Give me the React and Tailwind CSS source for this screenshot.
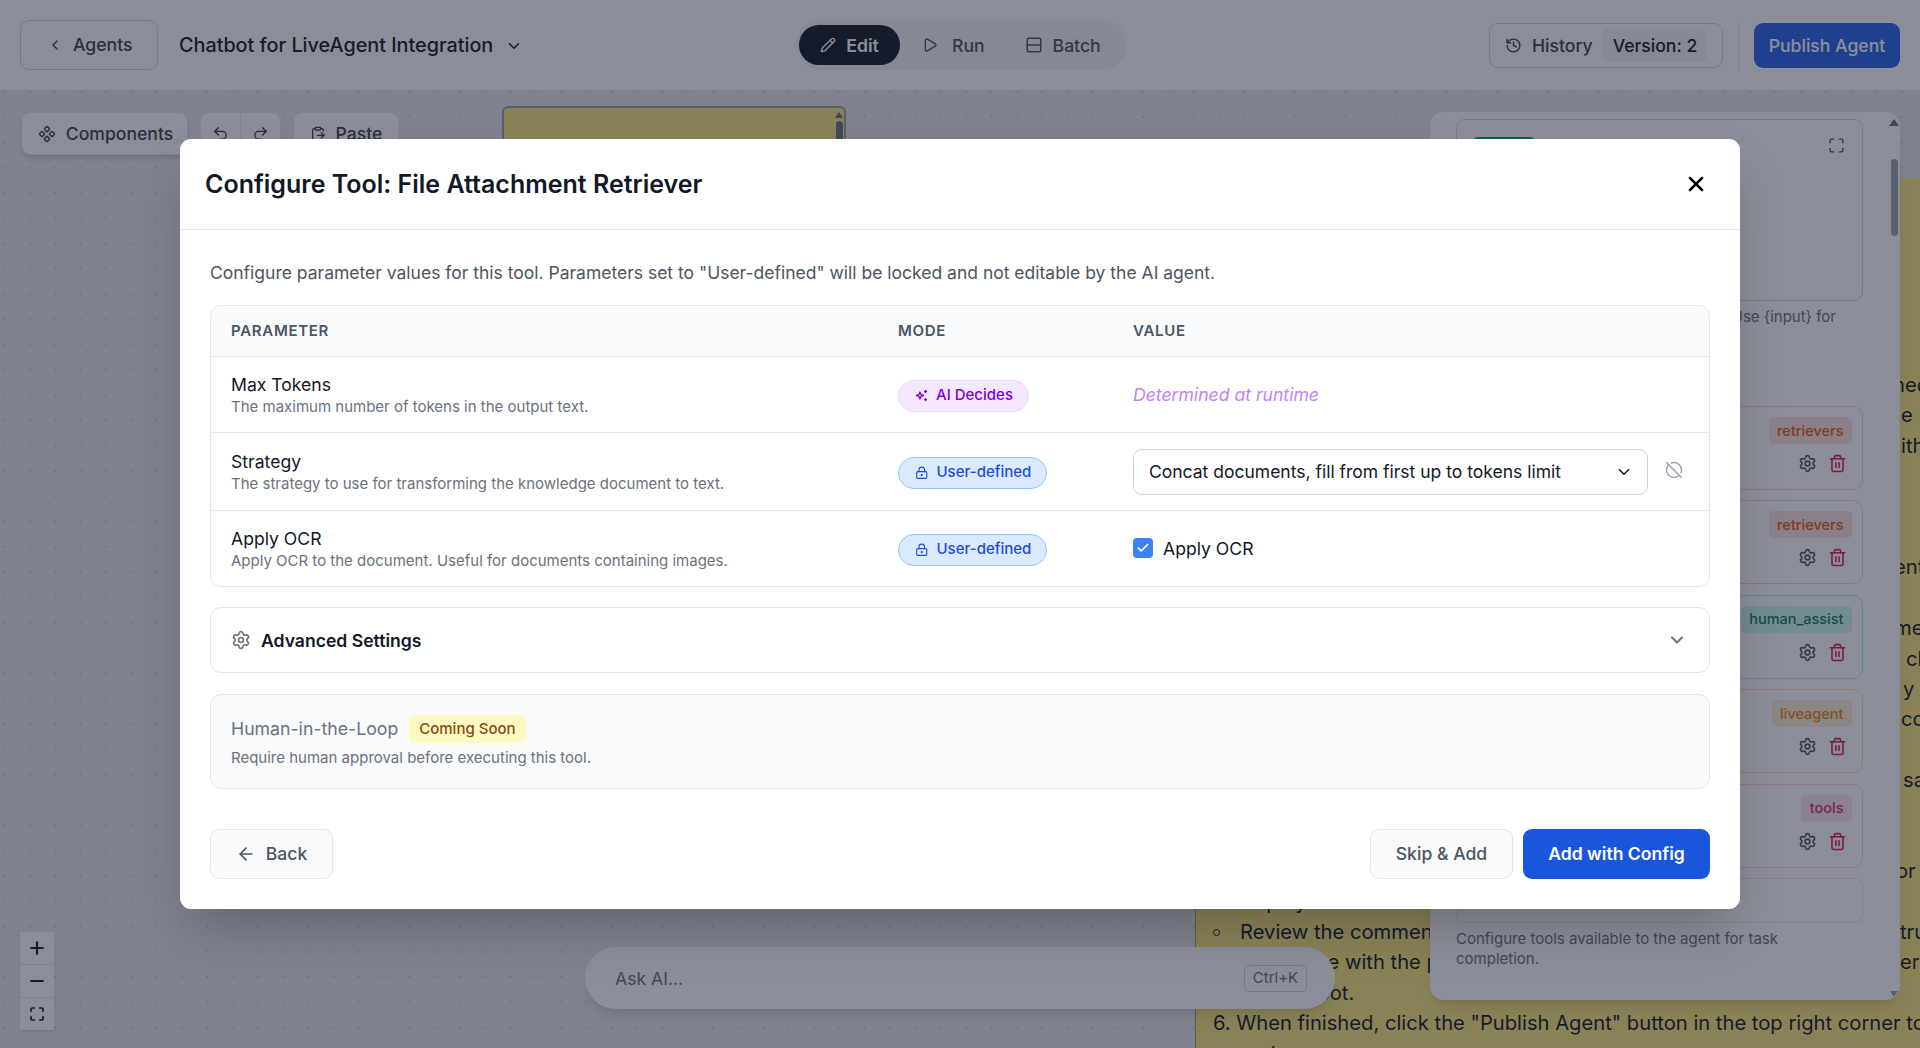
import React from "react";
import {
  ArrowLeft,
  ChevronDown,
  ChevronLeft,
  CircleOff,
  Check,
  ClipboardPaste,
  Component,
  History,
  LockKeyhole,
  Maximize,
  Minus,
  Pencil,
  Play,
  Plus,
  Redo2,
  Rows2,
  Settings,
  Trash2,
  Undo2,
  X,
} from "lucide-react";

// lines of the note that stick out from behind the panels
const noteRows = [
  { pad: "pl-[697px]", text: "ned" },
  { pad: "pl-[705px]", text: "e \"Add" },
  { pad: "pl-[705px]", text: "ith" },
  { pad: "pl-[705px]", text: "" },
  { pad: "pl-[705px]", text: "" },
  { pad: "pl-[705px]", text: "" },
  { pad: "pl-[698px]", text: "ent" },
  { pad: "pl-[705px]", text: "" },
  { pad: "pl-[698px]", text: "me" },
  { pad: "pl-[710px]", text: "ch" },
  { pad: "pl-[707px]", text: "y" },
  { pad: "pl-[705px]", text: "cc" },
  { pad: "pl-[705px]", text: "" },
  { pad: "pl-[707px]", text: "sa" },
  { pad: "pl-[705px]", text: "" },
  { pad: "pl-[705px]", text: "" },
  { pad: "pl-[700px]", text: "or y" },
  { pad: "pl-[44px]", text: "Deploy" },
];

const tools = [
  { label: "retrievers", tag: "bg-[#fee2e2] text-[#ea580c]", border: "border-[#fecaca]" },
  { label: "retrievers", tag: "bg-[#fee2e2] text-[#ea580c]", border: "border-[#fecaca]" },
  { label: "human_assist", tag: "bg-[#ccfbf1] text-[#0f766e]", border: "border-[#99f6e4]" },
  { label: "liveagent", tag: "bg-[#ffedd5] text-[#ea8a0c]", border: "border-[#fed7aa]" },
  { label: "tools", tag: "bg-[#fce7f3] text-[#db2777]", border: "border-[#fbcfe8]" },
];

function AiIcon() {
  return (
    <svg width="15" height="15" viewBox="0 0 24 24" fill="none" stroke="currentColor" strokeWidth="2.2" strokeLinejoin="round" strokeLinecap="round">
      <path d="M9.5 6.5l1.5 4 4 1.5-4 1.5-1.5 4-1.5-4-4-1.5 4-1.5z" />
      <path d="M18.5 4v3M17 5.5h3M18.5 17v3M17 18.5h3" />
    </svg>
  );
}

function ModeBadge({ ai }) {
  if (ai) {
    return (
      <span className="inline-flex items-center gap-[7px] h-[32px] w-[131px] pl-[15px] rounded-full border border-[#e9d5ff] bg-[#f3e8ff] text-[#8200db] text-[15px] font-medium">
        <AiIcon />
        AI Decides
      </span>
    );
  }
  return (
    <span className="inline-flex items-center gap-[8px] h-[32px] w-[149px] pl-[16px] rounded-full border border-[#93c5fd] bg-[#dbeafe] text-[#1d4ed8] text-[15px] font-medium">
      <LockKeyhole size={13.5} />
      User-defined
    </span>
  );
}

function ParamRow({ name, desc, height, border, children }) {
  return (
    <div className={`grid grid-cols-[667px_235px_1fr] items-center ${height} ${border ? "border-t border-[#e5e7eb]" : ""}`}>
      <div className="pl-[20px]">
        <div className="text-[17.6px] leading-[22px] text-[#111827]">{name}</div>
        <div className="mt-[2px] text-[15px] leading-[17px] text-[#6b7280]">{desc}</div>
      </div>
      <div className="pl-[20px] pt-[2px] flex items-center">{children[0]}</div>
      <div className="pl-[20px] flex items-center">{children[1]}</div>
    </div>
  );
}

function Modal() {
  return (
    <div className="w-[1560px] h-[770px] bg-white rounded-[11px] shadow-2xl flex flex-col">
      <div className="h-[91px] shrink-0 flex items-center justify-between pl-[25px] pr-[32px] border-b border-[#e5e7eb]">
        <h2 className="pt-[2px] text-[25px] font-semibold text-[#111827]">Configure Tool: File Attachment Retriever</h2>
        <X size={24} strokeWidth={2.5} className="text-black" />
      </div>

      <div className="flex-1 px-[30px] flex flex-col">
        <p className="mt-[29px] h-[27px] leading-[27px] text-[17.5px] text-[#4b5563]">
          Configure parameter values for this tool. Parameters set to "User-defined" will be locked and not editable by the AI agent.
        </p>

        <div className="mt-[19px] border border-[#e5e7eb] rounded-[11px] overflow-hidden">
          <div className="grid grid-cols-[667px_235px_1fr] items-center h-[51px] bg-[#f9fafb] border-b border-[#e5e7eb] text-[15px] font-semibold tracking-[0.7px] text-[#4b5563]">
            <div className="pl-[20px]">PARAMETER</div>
            <div className="pl-[20px]">MODE</div>
            <div className="pl-[20px]">VALUE</div>
          </div>
          <ParamRow name="Max Tokens" desc="The maximum number of tokens in the output text." height="h-[75px]">
            <ModeBadge ai />
            <span className="pt-[2px] italic text-[17.6px] text-[#c084fc]">Determined at runtime</span>
          </ParamRow>
          <ParamRow name="Strategy" desc="The strategy to use for transforming the knowledge document to text." height="h-[78px]" border>
            <ModeBadge />
            <div className="flex items-center gap-[17px]">
              <div className="w-[515px] h-[46px] flex items-center justify-between pl-[15px] pr-[14px] border border-[#d1d5db] rounded-[9px] text-[17.5px] text-[#111827]">
                <span className="pt-[1px]">Concat documents, fill from first up to tokens limit</span>
                <ChevronDown size={18} />
              </div>
              <CircleOff size={18} className="-mt-[3px] text-[#9ca3af]" />
            </div>
          </ParamRow>
          <ParamRow name="Apply OCR" desc="Apply OCR to the document. Useful for documents containing images." height="h-[76px]" border>
            <ModeBadge />
            <div className="flex items-center gap-[10px] text-[17.6px] text-[#111827]">
              <span className="w-[20px] h-[20px] rounded-[4px] bg-[#3b82f6] flex items-center justify-center">
                <Check size={14} strokeWidth={3} className="text-white" />
              </span>
              <span className="pt-[1px]">Apply OCR</span>
            </div>
          </ParamRow>
        </div>

        <div className="mt-[20px] h-[66px] shrink-0 border border-[#e5e7eb] rounded-[11px] flex items-center justify-between pl-[20px] pr-[22px]">
          <div className="flex items-center gap-[10px] text-[17.6px] font-semibold text-[#111827]">
            <Settings size={20} className="text-[#6b7280]" />
            <span className="pt-[2px]">Advanced Settings</span>
          </div>
          <ChevronDown size={20} strokeWidth={2.5} className="text-[#6b7280]" />
        </div>

        <div className="mt-[21px] h-[95px] shrink-0 border border-[#e5e7eb] bg-[#f9fafb] rounded-[11px] pl-[20px] pt-[20px]">
          <div className="flex items-center gap-[11px] h-[28px]">
            <span className="text-[17.7px] text-[#6b7280]">Human-in-the-Loop</span>
            <span className="h-[28px] px-[10px] flex items-center rounded-[6px] bg-[#fef9c3] text-[#854d0e] text-[15px] font-medium">Coming Soon</span>
          </div>
          <div className="mt-[6px] text-[15px] leading-[17px] text-[#6b7280]">Require human approval before executing this tool.</div>
        </div>

        <div className="mt-[40px] flex justify-between">
          <button className="w-[123px] h-[50px] flex items-center justify-center gap-[10px] border border-[#e5e7eb] bg-[#f9fafb] rounded-[9px] text-[17.6px] font-medium text-[#4b5563]">
            <ArrowLeft size={20} />
            Back
          </button>
          <div className="flex gap-[10px]">
            <button className="w-[143px] h-[50px] border border-[#e5e7eb] bg-[#f9fafb] rounded-[9px] text-[17.6px] font-medium text-[#4b5563]">Skip &amp; Add</button>
            <button className="w-[187px] h-[50px] bg-[#1a56db] rounded-[9px] text-[17.6px] font-semibold text-white">Add with Config</button>
          </div>
        </div>
      </div>
    </div>
  );
}

function TopBar() {
  return (
    <header className="relative h-[91px] shrink-0 bg-white border-b border-[#e5e7eb] flex items-center pt-[1px] pl-[20px] pr-[20px]">
      <button className="-mt-[2px] w-[138px] h-[50px] flex items-center pl-[26px] gap-[10px] border border-[#d1d5db] rounded-[9px] text-[17.6px] font-medium text-[#374151]">
        <ChevronLeft size={16} />
        <span className="pt-[2px]">Agents</span>
      </button>
      <div className="ml-[21px] flex items-center gap-[12px] text-[19.8px] font-medium text-[#111827]">
        Chatbot for LiveAgent Integration
        <ChevronDown size={18} />
      </div>
      <div className="absolute left-[796px] top-[20px] w-[331px] h-[50px] rounded-full bg-[#f3f4f6] flex items-center pl-[3px] text-[17.6px] font-medium text-[#4b5563]">
        <span className="w-[101px] h-[40px] rounded-full bg-[#111827] text-white font-semibold flex items-center justify-center gap-[10px]">
          <Pencil size={16} />
          <span className="pt-[2px]">Edit</span>
        </span>
        <span className="ml-[22px] flex items-center gap-[14px]">
          <Play size={16} />
          <span className="pt-[2px]">Run</span>
        </span>
        <span className="ml-[40px] flex items-center gap-[10px]">
          <Rows2 size={18} />
          <span className="pt-[2px]">Batch</span>
        </span>
      </div>
      <div className="ml-auto flex items-center">
        <div className="w-[234px] h-[45px] flex items-center pl-[15px] gap-[10px] border border-[#d1d5db] rounded-[9px] text-[17.6px] font-medium text-[#374151]">
          <History size={17} />
          <span className="pt-[1px]">History</span>
          <span className="h-[33px] px-[10px] pt-[1px] flex items-center rounded-[5px] bg-[#f3f4f6] text-[#111827]">Version: 2</span>
        </div>
        <div className="mx-[15px] w-px h-[50px] bg-[#e5e7eb]" />
        <button className="w-[146px] h-[45px] pt-[1px] rounded-[9px] bg-[#2563eb] text-white text-[17.6px] font-medium">Publish Agent</button>
      </div>
    </header>
  );
}

function SidePanel() {
  return (
    <div className="absolute left-[1430px] top-[21px] w-[470px] h-[888px] bg-white rounded-[14px] shadow-lg pl-[26px] pt-[7px] flex flex-col">
      <div className="relative h-[182px] shrink-0 w-[407px] border border-[#d1d5db] rounded-[9px]">
        <div className="absolute left-[16px] top-[17px] w-[62px] h-[24px] rounded-[5px] bg-[#0e9f6e]" />
        <Maximize size={17} className="absolute right-[17px] top-[17px] text-[#4b5563]" />
      </div>
      <div className="mt-[5px] h-[20px] w-[407px] text-right pr-[27px] text-[15px] text-[#6b7280]">Use {"{input}"} for</div>
      <div className="mt-[80px] flex flex-col gap-[10.4px]">
        {tools.map((tool, i) => (
          <div key={i} className={`w-[407px] h-[84px] border ${tool.border} rounded-[10px] flex flex-col items-end pr-[10px] pt-[10px]`}>
            <span className={`px-[8.5px] h-[27px] flex items-center rounded-[5px] text-[14.5px] font-medium ${tool.tag}`}>{tool.label}</span>
            <div className="mt-[10px] flex items-center gap-[11px] pr-[5px]">
              <Settings size={19} className="text-[#4b5563]" />
              <Trash2 size={19} className="text-[#e11d48]" />
            </div>
          </div>
        ))}
      </div>
      <div className="mt-[10.4px] w-[407px] h-[45px] shrink-0 border border-[#e5e7eb] rounded-[9px]" />
      <p className="mt-[6px] w-[340px] text-[15px] leading-[20px] text-[#6b7280]">Configure tools available to the agent for task completion.</p>
      {/* scroll bar */}
      <div className="absolute right-[1px] top-[7px] w-0 h-0 border-l-[5px] border-r-[5px] border-b-[7px] border-l-transparent border-r-transparent border-b-[#6b7280]" />
      <div className="absolute right-[2px] top-[47px] w-[7px] h-[77px] rounded-full bg-[#9ca3af]" />
      <div className="absolute right-[2px] bottom-[3px] w-0 h-0 border-l-[4px] border-r-[4px] border-t-[6px] border-l-transparent border-r-transparent border-t-[#9ca3af]" />
    </div>
  );
}

function Canvas() {
  return (
    <div className="relative flex-1 bg-[#e7e8ec] bg-[radial-gradient(#c4ccd8_1px,transparent_1px)] bg-[length:25.3px_25.3px] bg-[position:-8px_-12px] overflow-hidden">
      {/* sticky note behind the panel */}
      <div className="absolute left-[1195px] top-[87px] w-[740px] h-[900px] bg-[#fde67c] border-l border-[#a89f4f] text-[20.2px] text-[#111827]">
        <div className="h-[192px]" />
        {noteRows.map((row, i) => (
          <div key={i} className={`h-[30.4px] leading-[30.4px] whitespace-nowrap ${row.pad}`}>{row.text}</div>
        ))}
        <div className="h-[30.4px] leading-[30.4px] whitespace-nowrap pl-[17px] flex items-center">
          <span className="w-[7px] h-[7px] mr-[20px] rounded-full border border-[#111827]" />
          <span className="w-[660px]">Review the comment</span>
          <span>tru</span>
        </div>
        <div className="h-[30.4px] leading-[30.4px] whitespace-nowrap pl-[44px] flex">
          <span className="w-[660px]">Make sure with the p</span>
          <span>ern</span>
        </div>
        <div className="h-[30.4px] leading-[30.4px] whitespace-nowrap pl-[44px]">the chatbot.</div>
        <div className="h-[30.4px] leading-[30.4px] whitespace-nowrap pl-[17px]">6. When finished, click the "Publish Agent" button in the top right corner to</div>
        <div className="h-[30.4px] leading-[30.4px] whitespace-nowrap pl-[44px]">and</div>
      </div>
      {/* second note, mostly under the modal */}
      <div className="absolute left-[502px] top-[15px] w-[344px] h-[200px] bg-[#fde67c] border-2 border-[#a3a38f] rounded-[6px]">
        <div className="absolute right-[1px] top-[4px] w-0 h-0 border-l-[4px] border-r-[4px] border-b-[6px] border-l-transparent border-r-transparent border-b-[#6b7280]" />
        <div className="absolute right-[1px] top-[13px] w-[7px] h-[40px] rounded-full bg-[#6b7280]" />
      </div>

      {/* canvas toolbar */}
      <div className="absolute left-[21px] top-[21px] flex items-start gap-[12px] text-[17.6px] font-medium text-[#374151]">
        <div className="w-[167px] h-[43px] pl-[2px] flex items-center justify-center gap-[10px] bg-white border border-[#e5e7eb] rounded-[9px] shadow-md">
          <Component size={18} />
          <span className="pt-[2px]">Components</span>
        </div>
        <div className="w-[81px] h-[43px] flex items-center bg-white border border-[#e5e7eb] rounded-[9px]">
          <span className="w-1/2 h-full flex items-center justify-center border-r border-[#e5e7eb]"><Undo2 size={17} /></span>
          <span className="w-1/2 h-full flex items-center justify-center"><Redo2 size={17} /></span>
        </div>
        <div className="w-[106px] h-[43px] flex items-center justify-center gap-[10px] bg-white border border-[#e5e7eb] rounded-[9px]">
          <ClipboardPaste size={16} />
          <span className="pt-[2px]">Paste</span>
        </div>
      </div>

      {/* zoom controls */}
      <div className="absolute left-[20px] top-[841px] w-[34px] flex flex-col bg-white shadow text-[#111827]">
        <span className="h-[33px] flex items-center justify-center border-b border-[#e5e7eb]"><Plus size={20} strokeWidth={2.5} /></span>
        <span className="h-[33px] flex items-center justify-center border-b border-[#e5e7eb]"><Minus size={20} strokeWidth={2.5} /></span>
        <span className="h-[32px] flex items-center justify-center"><Maximize size={16} strokeWidth={2.5} /></span>
      </div>

      <SidePanel />

      {/* ask ai */}
      <div className="absolute left-[585px] top-[856px] w-[750px] h-[62px] rounded-[31px] bg-white shadow-lg flex items-center justify-between pl-[30px] pr-[28px]">
        <span className="pt-[3px] text-[17.6px] text-[#6b7280]">Ask AI...</span>
        <span className="w-[63px] h-[27px] pt-[1px] flex items-center justify-center border border-[#d1d5db] rounded-[5px] text-[15px] text-[#6b7280]">Ctrl+K</span>
      </div>
    </div>
  );
}

export default function App() {
  return (
    <div className="relative w-[1920px] h-[1048px] overflow-hidden flex flex-col font-['Inter',sans-serif]">
      <TopBar />
      <Canvas />
      <div className="absolute inset-0 bg-[#171d31]/50 flex items-center justify-center">
        <Modal />
      </div>
    </div>
  );
}
